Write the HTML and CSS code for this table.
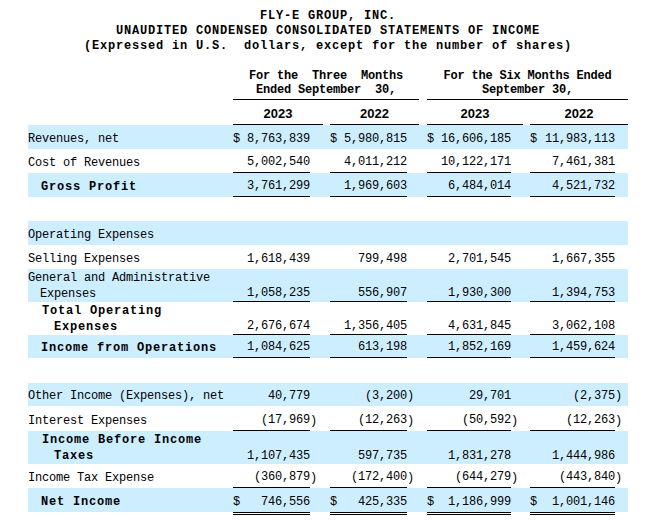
FILE: index.html
```html
<!DOCTYPE html>
<html lang="en">
<head>
<meta charset="utf-8">
<title>FLY-E GROUP, INC. Statements of Income</title>
<link rel="stylesheet" href="styles.css">
</head>
<body>
<div class="title">
  <div class="tl">FLY-E GROUP, INC.</div>
  <div class="tl">UNAUDITED CONDENSED CONSOLIDATED STATEMENTS OF INCOME</div>
  <div class="tl">(Expressed in U.S.  dollars, except for the number of shares)</div>
</div>
<table class="fin">
  <colgroup>
    <col class="w-label"><col class="w-c1"><col class="w-p13"><col class="w-g7">
    <col class="w-c2"><col class="w-p12"><col class="w-g8">
    <col class="w-c3"><col class="w-p12"><col class="w-g7">
    <col class="w-c4"><col class="w-p13">
  </colgroup>
  <tr class="hdr">
    <td></td>
    <td colspan="5" class="grp">For the  Three  Months
Ended September  30,</td>
    <td></td>
    <td colspan="5" class="grp">For the Six Months Ended
September 30,</td>
  </tr>
  <tr class="years">
    <td></td>
    <td colspan="2" class="yr">2023</td><td></td>
    <td colspan="2" class="yr">2022</td><td></td>
    <td colspan="2" class="yr">2023</td><td></td>
    <td colspan="2" class="yr">2022</td>
  </tr>
  <tr class="blue">
    <td class="lbl">Revenues, net</td>
    <td class="n"><span class="cur">$</span>8,763,839</td><td></td><td></td>
    <td class="n"><span class="cur">$</span>5,980,815</td><td></td><td></td>
    <td class="n"><span class="cur">$</span>16,606,185</td><td></td><td></td>
    <td class="n"><span class="cur">$</span>11,983,113</td><td></td>
  </tr>
  <tr>
    <td class="lbl">Cost of Revenues</td>
    <td class="n ul">5,002,540</td><td></td><td></td>
    <td class="n ul">4,011,212</td><td></td><td></td>
    <td class="n ul">10,122,171</td><td></td><td></td>
    <td class="n ul">7,461,381</td><td></td>
  </tr>
  <tr class="blue">
    <td class="lbl b">Gross Profit</td>
    <td class="n ul">3,761,299</td><td></td><td></td>
    <td class="n ul">1,969,603</td><td></td><td></td>
    <td class="n ul">6,484,014</td><td></td><td></td>
    <td class="n ul">4,521,732</td><td></td>
  </tr>
  <tr>
    <td></td><td></td><td></td><td></td><td></td><td></td><td></td><td></td><td></td><td></td><td></td><td></td>
  </tr>
  <tr class="blue">
    <td class="lbl">Operating Expenses</td>
    <td></td><td></td><td></td><td></td><td></td><td></td><td></td><td></td><td></td><td></td><td></td>
  </tr>
  <tr>
    <td class="lbl">Selling Expenses</td>
    <td class="n">1,618,439</td><td></td><td></td>
    <td class="n">799,498</td><td></td><td></td>
    <td class="n">2,701,545</td><td></td><td></td>
    <td class="n">1,667,355</td><td></td>
  </tr>
  <tr class="blue tall">
    <td class="lbl hang">General and Administrative<br>Expenses</td>
    <td class="n ul">1,058,235</td><td></td><td></td>
    <td class="n ul">556,907</td><td></td><td></td>
    <td class="n ul">1,930,300</td><td></td><td></td>
    <td class="n ul">1,394,753</td><td></td>
  </tr>
  <tr class="tall">
    <td class="lbl b hang">Total Operating<br>Expenses</td>
    <td class="n ul">2,676,674</td><td></td><td></td>
    <td class="n ul">1,356,405</td><td></td><td></td>
    <td class="n ul">4,631,845</td><td></td><td></td>
    <td class="n ul">3,062,108</td><td></td>
  </tr>
  <tr class="blue h23">
    <td class="lbl b">Income from Operations</td>
    <td class="n ul">1,084,625</td><td></td><td></td>
    <td class="n ul">613,198</td><td></td><td></td>
    <td class="n ul">1,852,169</td><td></td><td></td>
    <td class="n ul">1,459,624</td><td></td>
  </tr>
  <tr class="h25">
    <td></td><td></td><td></td><td></td><td></td><td></td><td></td><td></td><td></td><td></td><td></td><td></td>
  </tr>
  <tr class="blue h23">
    <td class="lbl">Other Income (Expenses), net</td>
    <td class="n">40,779</td><td></td><td></td>
    <td class="n">(3,200</td><td class="p">)</td><td></td>
    <td class="n">29,701</td><td></td><td></td>
    <td class="n">(2,375</td><td class="p">)</td>
  </tr>
  <tr class="h25">
    <td class="lbl">Interest Expenses</td>
    <td class="n ul">(17,969</td><td class="p">)</td><td></td>
    <td class="n ul">(12,263</td><td class="p">)</td><td></td>
    <td class="n ul">(50,592</td><td class="p">)</td><td></td>
    <td class="n ul">(12,263</td><td class="p">)</td>
  </tr>
  <tr class="blue tall">
    <td class="lbl b hang">Income Before Income<br>Taxes</td>
    <td class="n">1,107,435</td><td></td><td></td>
    <td class="n">597,735</td><td></td><td></td>
    <td class="n">1,831,278</td><td></td><td></td>
    <td class="n">1,444,986</td><td></td>
  </tr>
  <tr>
    <td class="lbl">Income Tax Expense</td>
    <td class="n ul">(360,879</td><td class="p">)</td><td></td>
    <td class="n ul">(172,400</td><td class="p">)</td><td></td>
    <td class="n ul">(644,279</td><td class="p">)</td><td></td>
    <td class="n ul">(443,840</td><td class="p">)</td>
  </tr>
  <tr class="blue">
    <td class="lbl b">Net Income</td>
    <td class="n"><span class="cur">$</span>746,556</td><td></td><td></td>
    <td class="n"><span class="cur">$</span>425,335</td><td></td><td></td>
    <td class="n"><span class="cur">$</span>1,186,999</td><td></td><td></td>
    <td class="n"><span class="cur">$</span>1,001,146</td><td></td>
  </tr>
  <tr class="dbl">
    <td></td>
    <td class="dl"></td><td></td><td></td>
    <td class="dl"></td><td></td><td></td>
    <td class="dl"></td><td></td><td></td>
    <td class="dl"></td><td></td>
  </tr>
</table>
</body>
</html>
```
FILE: styles.css
```css
html, body {
  margin: 0;
  padding: 0;
  background: #ffffff;
}

body {
  font-family: "Liberation Mono", "DejaVu Sans Mono", monospace;
  font-size: 12px;
  color: #000000;
}

.title {
  width: 600px;
  margin-left: 28px;
  padding-top: 9px;
  text-align: center;
  font-weight: bold;
  line-height: 15px;
  letter-spacing: 0.8px;
}

.tl {
  white-space: pre;
}

.fin {
  margin-left: 28px;
  width: 600px;
  table-layout: fixed;
  border-collapse: separate;
  border-spacing: 0;
  letter-spacing: -0.2px;
}

.w-label { width: 205px; }
.w-c1 { width: 77px; }
.w-c2 { width: 77px; }
.w-c3 { width: 84px; }
.w-c4 { width: 85px; }
.w-p13 { width: 13px; }
.w-p12 { width: 12px; }
.w-g7 { width: 7px; }
.w-g8 { width: 8px; }

.fin td {
  padding: 0 0 2px 0;
  vertical-align: bottom;
  line-height: 16px;
  white-space: nowrap;
}

.fin tr { height: 24px; }
.fin tr.tall { height: 33px; }
.fin tr.h23 { height: 23px; }
.fin tr.h25 { height: 25px; }

.fin tr.tall td { padding-bottom: 0; }

.fin tr.blue { background: #cceeff; }

.fin tr.hdr { height: 46px; }
.fin tr.years { height: 25px; }

.fin td.grp {
  text-align: center;
  font-weight: bold;
  line-height: 14px;
  white-space: pre;
  border-bottom: 1px solid #000;
}

.yr {
  text-align: center;
  font-family: "Liberation Sans", Arial, sans-serif;
  font-weight: bold;
  font-size: 13px;
  letter-spacing: 0;
  border-bottom: 1px solid #000;
}

.lbl { text-align: left; }

.fin td.lbl.b {
  font-weight: bold;
  letter-spacing: 0.8px;
  padding-left: 13px;
}

.fin td.lbl.hang {
  padding-left: 12px;
  text-indent: -12px;
}

.fin td.lbl.b.hang {
  padding-left: 26px;
  text-indent: -12px;
}

.n { text-align: right; }

.p { text-align: left; }

.cur { float: left; }

.ul { border-bottom: 1px solid #000; }

.fin tr.dbl { height: 3px; }

.fin tr.dbl td {
  padding: 0;
  height: 0;
  line-height: 0;
  font-size: 0;
}

.fin tr.dbl td.dl { border-top: 3px double #000; }
```
